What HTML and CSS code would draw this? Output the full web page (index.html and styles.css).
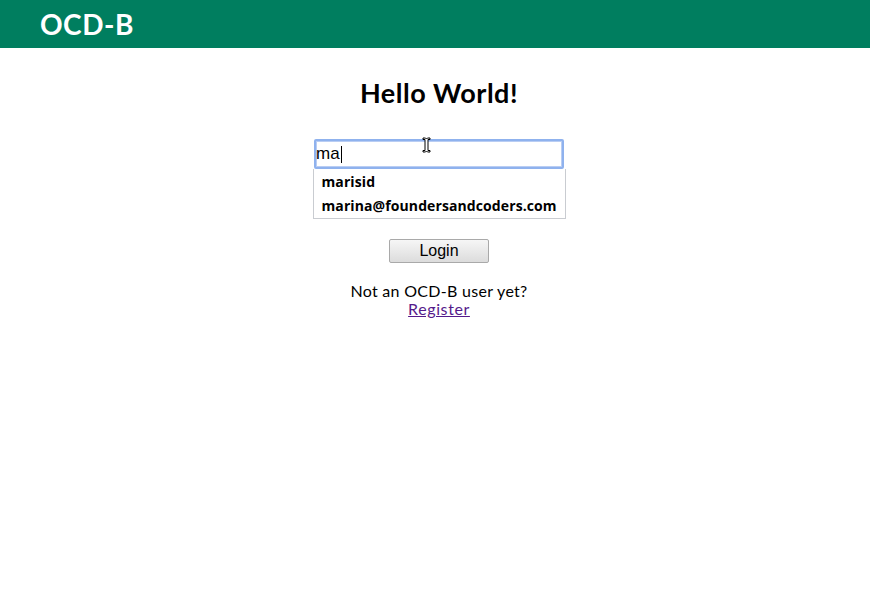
FILE: index.html
```html
<!DOCTYPE html>
<html>
<head>
<meta charset="utf-8">
<link rel="stylesheet" href="styles.css">
</head>
<body>
<header class="topbar"><span class="brand">OCD-B</span></header>
<main class="content">
  <h1 class="title">Hello World!</h1>
  <form class="login">
    <div class="field">
      <div class="input"><span class="typed">ma</span><span class="caret"></span></div>
      <svg class="ibeam" width="9" height="16" viewBox="0 0 9 16"><path d="M1 1h2.5l1 1 1-1H8v1.5H6v11h2V15H5.5l-1-1-1 1H1v-1.5h2v-11H1z" fill="#fff" stroke="#000" stroke-width="1"/></svg>
      <ul class="suggest">
        <li>marisid</li>
        <li>marina@foundersandcoders.com</li>
      </ul>
    </div>
    <button type="button" class="btn">Login</button>
  </form>
  <p class="note">Not an OCD-B user yet?<br><a href="#" class="reg">Register</a></p>
</main>
</body>
</html>
```
FILE: styles.css
```css
* { box-sizing: border-box; }
body { margin: 0; font-family: "Lato", "Open Sans", sans-serif; color: #111; background: #fff; }
.topbar { height: 48px; background: #007e5f; display: flex; align-items: center; padding-left: 40px; }
.brand { color: #fff; font-weight: 700; font-size: 28px; font-family: "Lato", sans-serif; letter-spacing: 0.5px; }
.content { display: flex; flex-direction: column; align-items: center; padding-left: 8px; }
.title { margin: 29px 0 0; font-size: 27px; font-weight: 700; line-height: 32px; color: #000; letter-spacing: 0.5px; }
.login { margin-top: 30px; display: flex; flex-direction: column; align-items: center; }
.field { position: relative; width: 252px; display: flex; flex-direction: column; align-items: center; }
.input { width: 250px; height: 30px; border: 2px solid #8fb2ee; border-radius: 2px; box-shadow: inset 0 0 0 1px #b9cdf3; display: flex; align-items: center; padding-left: 0; font-family: "Liberation Sans", Arial, sans-serif; font-size: 17px; color: #000; }
.caret { width: 1px; height: 17px; background: #000; margin-left: 1px; }
.ibeam { position: absolute; left: 109px; top: -2px; }
.suggest { list-style: none; margin: 0; padding: 1px 0 0; width: 253px; border: 1px solid #c9ccd1; border-top: 0; font-family: "Open Sans", "DejaVu Sans", sans-serif; font-weight: 700; font-size: 14px; color: #000; }
.suggest li { padding-left: 8px; height: 24px; line-height: 24px; letter-spacing: 0.1px; }
.btn { margin-top: 20px; width: 100px; height: 24px; font-family: "Liberation Sans", Arial, sans-serif; font-size: 16px; color: #000; border: 1px solid #a9a9a9; border-radius: 2px; background: linear-gradient(#f6f6f6, #dcdcdc); padding: 0; }
.note { margin: 19px 0 0; text-align: center; font-size: 16px; line-height: 18px; color: #000; letter-spacing: 0.3px; }
.reg { color: #551a8b; letter-spacing: 0.6px; }
```
